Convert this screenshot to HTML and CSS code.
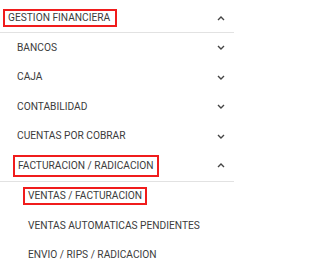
FILE: index.html
```html
<!DOCTYPE html>
<html lang="es">
<head>
<meta charset="utf-8">
<link rel="stylesheet" href="styles.css">
</head>
<body>
<nav class="menu">
  <div class="row top">
    <span class="label boxed wide">GESTION FINANCIERA</span>
    <svg class="chev" viewBox="0 0 8 5"><path d="M1 4 L4 1 L7 4"/></svg>
  </div>
  <div class="divider"></div>
  <div class="row l1"><span class="label">BANCOS</span><svg class="chev" viewBox="0 0 8 5"><path d="M1 1 L4 4 L7 1"/></svg></div>
  <div class="row l1"><span class="label">CAJA</span><svg class="chev" viewBox="0 0 8 5"><path d="M1 1 L4 4 L7 1"/></svg></div>
  <div class="row l1"><span class="label">CONTABILIDAD</span><svg class="chev" viewBox="0 0 8 5"><path d="M1 1 L4 4 L7 1"/></svg></div>
  <div class="row l1"><span class="label">CUENTAS POR COBRAR</span><svg class="chev" viewBox="0 0 8 5"><path d="M1 1 L4 4 L7 1"/></svg></div>
  <div class="row l1"><span class="label boxed tall">FACTURACION / RADICACION</span><svg class="chev" viewBox="0 0 8 5"><path d="M1 4 L4 1 L7 4"/></svg></div>
  <div class="divider"></div>
  <div class="row l2"><span class="label boxed">VENTAS / FACTURACION</span></div>
  <div class="row l2"><span class="label">VENTAS AUTOMATICAS PENDIENTES</span></div>
  <div class="row l2"><span class="label">ENVIO / RIPS / RADICACION</span></div>
</nav>
</body>
</html>
```
FILE: styles.css
```css
html, body {
  margin: 0;
  padding: 0;
  background: #ffffff;
}
body {
  font-family: Roboto, "Liberation Sans", sans-serif;
  font-size: 10.2px;
  color: #3c3c3c;
}
.menu {
  display: flex;
  flex-direction: column;
  width: 234px;
  box-sizing: border-box;
  padding-top: 4px;
}
.row {
  display: flex;
  align-items: center;
  justify-content: space-between;
  height: 29.5px;
  padding-right: 9px;
}
.top { height: 28px; padding-left: 8px; }
.l1 { padding-left: 17px; }
.l2 { padding-left: 28px; }
.label {
  line-height: 14px;
  white-space: nowrap;
}
.boxed {
  border: 2px solid #f01c1c;
  padding: 0 3px;
  margin-left: -5px;
}
.boxed.wide {
  padding: 0 5px 0 3px;
}
.boxed.tall {
  padding: 2px 3px;
  margin-left: -4px;
}
.chev {
  width: 8px;
  height: 5px;
  fill: none;
  stroke: #444;
  stroke-width: 1.4;
}
.divider {
  height: 1px;
  background: #e2e2e2;
}
```
